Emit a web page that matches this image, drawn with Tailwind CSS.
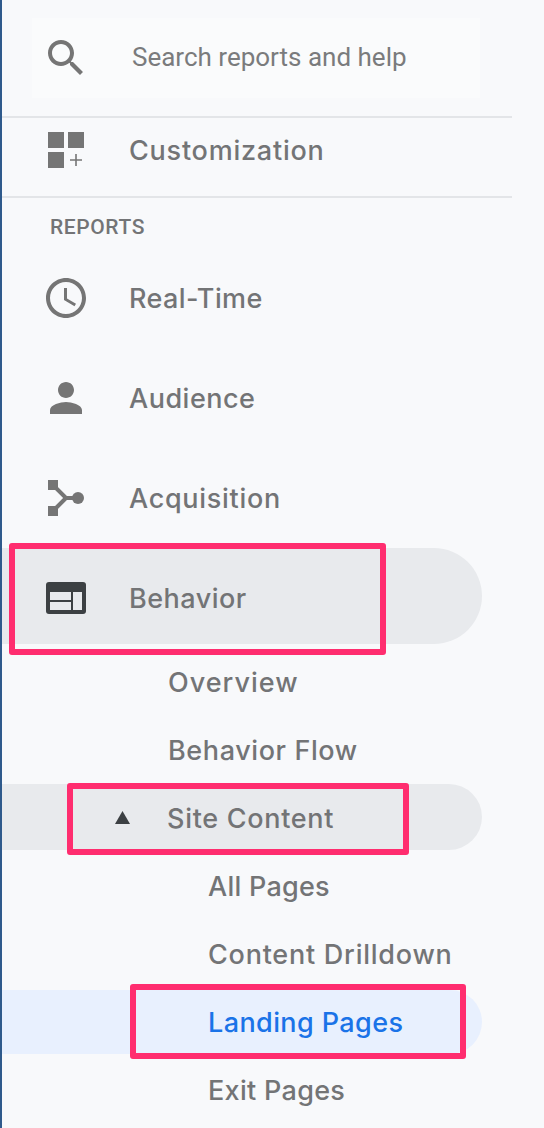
<!DOCTYPE html>
<html lang="en">
<head>
  <meta charset="UTF-8">
  <title>Analytics sidebar</title>
  <script src="https://cdn.jsdelivr.net/npm/@tailwindcss/browser@4"></script>
</head>
<body class="bg-[#f8f9fb] font-['Inter',sans-serif] text-[#737476]">
  <div class="relative h-[1128px] w-[544px] overflow-hidden border-l-2 border-[#2f5a8c]">

    <!-- search -->
    <div class="h-[116px] pt-[18px]">
      <div class="flex h-[80px] w-[448px] ml-[30px] items-center bg-[#fafbfc] pl-[10px]">
        <svg class="h-12 w-12 shrink-0 fill-[#757575]" viewBox="0 0 24 24"><path d="M15.5 14h-.79l-.28-.27C15.41 12.59 16 11.11 16 9.5 16 5.91 13.09 3 9.5 3S3 5.91 3 9.5 5.91 16 9.5 16c1.61 0 3.09-.59 4.23-1.57l.27.28v.79l5 4.99L20.49 19l-4.99-5zm-6 0C7.01 14 5 11.99 5 9.5S7.01 5 9.5 5 14 7.01 14 9.5 11.99 14 9.5 14z"/></svg>
        <span class="ml-[42px] mb-[2px] font-['Roboto',sans-serif] text-[26px] text-[#7a7b7d]">Search reports and help</span>
      </div>
    </div>

    <div class="w-[510px] border-t-2 border-[#e3e5e8]"></div>
    <div class="flex h-[78px] items-center pb-[14px] pl-10">
      <svg class="h-12 w-12 shrink-0 fill-[#757575]" viewBox="0 0 24 24"><path d="M3 3h8v8H3zM13 3h8v8h-8zM3 13h8v8H3z"/><path d="M16.6 14h.8v2.6H20v.8h-2.6V20h-.8v-2.6H14v-.8h2.6z"/></svg>
      <span class="ml-[39px] mt-[2px] text-[27px] font-medium tracking-[0.77px]">Customization</span>
    </div>
    <div class="w-[510px] border-t-2 border-[#e3e5e8]"></div>

    <div class="h-[50px] pl-12 pt-[16px] font-['Roboto',sans-serif] text-[21px] leading-[26px] font-medium tracking-[0.6px]">REPORTS</div>

    <div class="flex h-[100px] items-center pl-10">
      <svg class="h-12 w-12 shrink-0 fill-[#757575]" viewBox="0 0 24 24"><path d="M11.99 2C6.47 2 2 6.48 2 12s4.47 10 9.99 10C17.52 22 22 17.52 22 12S17.52 2 11.99 2zM12 20c-4.42 0-8-3.58-8-8s3.58-8 8-8 8 3.58 8 8-3.58 8-8 8zm.5-13H11v6l5.25 3.15.75-1.23-4.5-2.67z"/></svg>
      <span class="ml-[39px] mt-[2px] text-[27px] font-medium tracking-[0.4px]">Real-Time</span>
    </div>
    <div class="flex h-[100px] items-center pl-10">
      <svg class="h-12 w-12 shrink-0 fill-[#757575]" viewBox="0 0 24 24"><path d="M12 12c2.21 0 4-1.79 4-4s-1.79-4-4-4-4 1.79-4 4 1.79 4 4 4zm0 2c-2.67 0-8 1.34-8 4v2h16v-2c0-2.66-5.33-4-8-4z"/></svg>
      <span class="ml-[39px] mt-[2px] text-[27px] font-medium tracking-[0.5px]">Audience</span>
    </div>
    <div class="flex h-[100px] items-center pl-10">
      <svg class="h-12 w-12 shrink-0 fill-[#757575]" viewBox="0 0 24 24"><path d="M3 3h5v5H3zM3 16h5v5H3z"/><circle cx="18" cy="12" r="3"/><path d="M7 7l5 5h5M7 17l5-5" fill="none" stroke="#757575" stroke-width="2"/></svg>
      <span class="ml-[39px] mt-[2px] text-[27px] font-medium tracking-[0.7px]">Acquisition</span>
    </div>

    <!-- Behavior -->
    <div class="flex h-[96px] w-[480px] items-center rounded-r-[48px] bg-[#e8eaed] pl-10">
      <svg class="mt-1 h-12 w-12 shrink-0" viewBox="0 0 24 24"><rect x="2" y="4" width="20" height="16" rx="1.5" fill="#3c4043"/><path d="M4 9h10.5v4H4zM4 14h10.5v4H4zM15.5 9H20v9h-4.5z" fill="#e8eaed"/></svg>
      <span class="ml-[39px] mt-[6px] text-[27px] font-medium tracking-[0.5px]">Behavior</span>
    </div>
    <div class="mt-1 flex h-[68px] items-center pl-[166px] pt-[2px] text-[27px] font-medium tracking-[1px]">Overview</div>
    <div class="flex h-[68px] items-center pl-[166px] pt-[2px] text-[27px] font-medium tracking-[0.6px]">Behavior Flow</div>

    <!-- Site Content -->
    <div class="flex h-[66px] w-[480px] items-center rounded-r-[33px] bg-[#e8eaed] pl-[113px]">
      <svg class="mt-[1px] h-[13px] w-[15px] shrink-0 fill-[#3c4043]" viewBox="0 0 15 13"><path d="M7.5 0L15 13H0z"/></svg>
      <span class="ml-[37px] mt-[5px] text-[27px] font-medium tracking-[0.7px]">Site Content</span>
    </div>
    <div class="mt-[2px] flex h-[68px] items-center pl-[206px] pt-[2px] text-[27px] font-medium tracking-[0.25px]">All Pages</div>
    <div class="flex h-[68px] items-center pl-[206px] pt-[2px] text-[27px] font-medium tracking-[0.76px]">Content Drilldown</div>

    <!-- Landing Pages -->
    <div class="mt-[2px] flex h-[64px] w-[480px] items-center rounded-r-[32px] bg-[#e8f0fe] pl-[206px] text-[27px] font-medium tracking-[0.4px] text-[#1a73e8]"><span class="mt-[2px]">Landing Pages</span></div>
    <div class="mt-[2px] flex h-[68px] items-center pl-[206px] pt-[2px] text-[27px] font-medium tracking-[0.3px]">Exit Pages</div>

    <!-- annotation boxes drawn over the menu -->
    <div class="absolute left-[7px] top-[543px] h-[112px] w-[377px] rounded-[3px] border-[6px] border-[#ff2d6f]"></div>
    <div class="absolute left-[65px] top-[783px] h-[72px] w-[342px] rounded-[3px] border-[6px] border-[#ff2d6f]"></div>
    <div class="absolute left-[128px] top-[984px] h-[75px] w-[336px] rounded-[3px] border-[6px] border-[#ff2d6f]"></div>
  </div>
</body>
</html>
